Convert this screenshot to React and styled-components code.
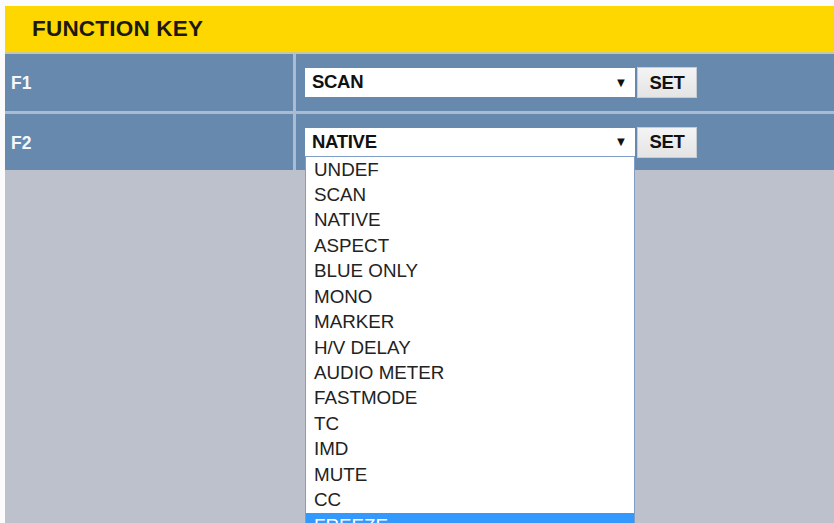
import React, { useState } from 'react';
import styled, { createGlobalStyle } from 'styled-components';

const GlobalStyle = createGlobalStyle`
  html, body {
    margin: 0;
    padding: 0;
    overflow: hidden;
    background: #fbfbfb;
  }
  body {
    padding: 6px 0 0 5px;
    font-family: "Liberation Sans", Arial, sans-serif;
  }
`;

const Page = styled.div`
  height: calc(100vh - 6px);
  background-color: #bcc1cb;
`;

const Header = styled.div`
  height: 46px;
  display: flex;
  align-items: center;
  padding-left: 27px;
  background-color: #fed700;
  border-bottom: 2px solid #c9c7a0;
`;

const HeaderTitle = styled.h1`
  margin: 0;
  font-size: 22.5px;
  font-weight: bold;
  color: #1c1a10;
  letter-spacing: 0.2px;
`;

const Table = styled.div`
  display: grid;
  grid-template-columns: 288px 1fr;
  background-color: #aabcd2;
  row-gap: 3px;
  column-gap: 3px;
`;

const LabelCell = styled.div`
  height: ${p => p.$h}px;
  display: flex;
  align-items: center;
  padding: 2px 0 0 6px;
  box-sizing: border-box;
  background-color: #6889ae;
  color: #f4f7fb;
  font-size: 17.5px;
  font-weight: bold;
`;

const ValueCell = styled.div`
  height: ${p => p.$h}px;
  display: flex;
  align-items: center;
  padding-left: 9px;
  gap: 2px;
  background-color: #6889ae;
`;

const SelectWrap = styled.div`
  position: relative;
`;

const SelectBox = styled.div`
  width: 330px;
  height: 29px;
  box-sizing: border-box;
  display: flex;
  align-items: center;
  justify-content: space-between;
  padding: 0 8px 0 7px;
  background-color: #fff;
  border-bottom: 1px solid ${p => (p.$open ? '#8ea6c8' : '#fff')};
  font-size: 18.5px;
  font-weight: bold;
  color: #111;
  letter-spacing: -0.3px;
`;

const Arrow = styled.span`
  font-size: 13px;
  color: #111;
`;

const SetButton = styled.button`
  width: 60px;
  height: 31px;
  padding: 0;
  border: 1px solid #c8ccd2;
  background: linear-gradient(#f4f4f4, #e4e4e4);
  font-family: "Liberation Sans", Arial, sans-serif;
  font-size: 18.5px;
  font-weight: bold;
  color: #111;
  letter-spacing: -0.3px;
`;

const DropList = styled.ul`
  position: absolute;
  top: 28px;
  left: 0;
  width: 330px;
  box-sizing: border-box;
  margin: 0;
  padding: 0;
  list-style: none;
  background-color: #fff;
  border: 1px solid #7f9dc6;
  z-index: 10;
`;

const DropItem = styled.li`
  height: 25.45px;
  line-height: 25.45px;
  padding-left: 8px;
  font-size: 18.8px;
  color: ${p => (p.$active ? '#fff' : '#222')};
  background-color: ${p => (p.$active ? '#3399ff' : 'transparent')};
`;

const OPTIONS = [
  'UNDEF', 'SCAN', 'NATIVE', 'ASPECT', 'BLUE ONLY', 'MONO', 'MARKER', 'H/V DELAY',
  'AUDIO METER', 'FASTMODE', 'TC', 'IMD', 'MUTE', 'CC', 'FREEZE',
];

function KeyRow({ label, value, open, height }) {
  return (
    <>
      <LabelCell $h={height}>{label}</LabelCell>
      <ValueCell $h={height}>
        <SelectWrap>
          <SelectBox $open={open}>
            <span>{value}</span>
            <Arrow>▼</Arrow>
          </SelectBox>
          {open && (
            <DropList>
              {OPTIONS.map(o => (
                <DropItem key={o} $active={o === 'FREEZE'}>{o}</DropItem>
              ))}
            </DropList>
          )}
        </SelectWrap>
        <SetButton>SET</SetButton>
      </ValueCell>
    </>
  );
}

export default function App() {
  const [keys] = useState([
    { label: 'F1', value: 'SCAN', open: false, height: 57 },
    { label: 'F2', value: 'NATIVE', open: true, height: 56 },
  ]);

  return (
    <>
      <GlobalStyle />
      <Page>
        <Header><HeaderTitle>FUNCTION KEY</HeaderTitle></Header>
        <Table>
          {keys.map(k => <KeyRow key={k.label} {...k} />)}
        </Table>
      </Page>
    </>
  );
}
